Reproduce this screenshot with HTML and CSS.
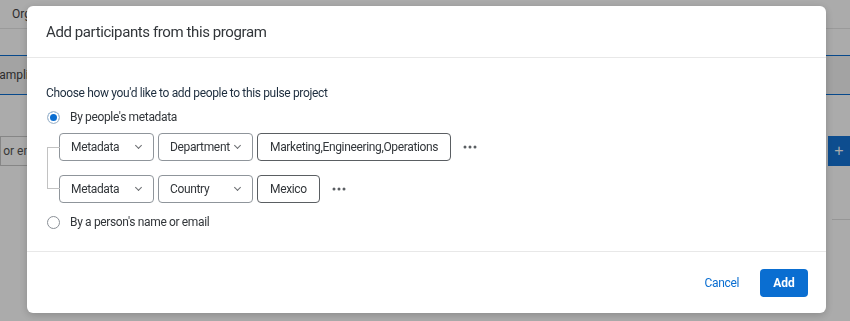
FILE: index.html
```html
<!DOCTYPE html>
<html lang="en">
<head>
  <meta charset="UTF-8" />
  <title>Add participants</title>
  <link rel="stylesheet" href="styles.css">
</head>
<body>
  <!-- page behind the modal -->
  <div class="page">
    <div class="topnav"><span class="nav-tab">Organization</span></div>
    <div class="subbar"></div>
    <div class="tabs"><span class="tab">Sampling</span></div>
    <div class="search-row">
      <div class="search-box">Search by name or email</div>
      <div class="search-spacer"></div>
      <button class="add-square">+</button>
    </div>
    <div class="table-head"></div>
  </div>

  <div class="backdrop"></div>

  <div class="modal">
    <div class="modal-header">
      <h2>Add participants from this program</h2>
    </div>

    <div class="modal-body">
      <p class="prompt">Choose how you'd like to add people to this pulse project</p>

      <label class="radio-row">
        <span class="radio checked"></span>
        <span>By people's metadata</span>
      </label>

      <div class="rules">
        <div class="rule">
          <div class="select"><span>Metadata</span><span class="chev"></span></div>
          <div class="select"><span>Department</span><span class="chev"></span></div>
          <div class="value">Marketing,Engineering,Operations</div>
          <svg class="more" width="14" height="4" viewBox="0 0 14 4"><circle cx="2" cy="2" r="1.5"/><circle cx="7" cy="2" r="1.5"/><circle cx="12" cy="2" r="1.5"/></svg>
        </div>
        <div class="rule">
          <div class="select"><span>Metadata</span><span class="chev"></span></div>
          <div class="select"><span>Country</span><span class="chev"></span></div>
          <div class="value">Mexico</div>
          <svg class="more" width="14" height="4" viewBox="0 0 14 4"><circle cx="2" cy="2" r="1.5"/><circle cx="7" cy="2" r="1.5"/><circle cx="12" cy="2" r="1.5"/></svg>
        </div>
      </div>

      <label class="radio-row">
        <span class="radio"></span>
        <span>By a person's name or email</span>
      </label>
    </div>

    <div class="modal-footer">
      <button class="btn-link">Cancel</button>
      <button class="btn-primary">Add</button>
    </div>
  </div>
</body>
</html>
```

FILE: styles.css
```css
* {
  box-sizing: border-box;
}

body {
  margin: 0;
  font-family: Roboto, "Liberation Sans", sans-serif;
  background: #ffffff;
  color: #32363a;
  overflow: hidden;
}

/* background page */
.page {
  width: 850px;
  height: 321px;
}

.topnav {
  height: 29px;
  border-bottom: 1px solid #e6e6e6;
  padding-left: 12px;
  display: flex;
  align-items: center;
  font-size: 12px;
  color: #444;
}

.subbar {
  height: 26px;
}

.tabs {
  height: 40px;
  border-top: 1px solid #0b6ed1;
  border-bottom: 1px solid #0b6ed1;
  background: #f3f3f3;
  display: flex;
  align-items: center;
  font-size: 12px;
  color: #444;
  text-indent: -8px;
}

.search-row {
  margin-top: 41px;
  display: flex;
  height: 30px;
}

.search-box {
  width: 300px;
  border: 1px solid #c8c8c8;
  display: flex;
  align-items: center;
  font-size: 12px;
  color: #555;
  text-indent: -86px;
}

.search-spacer {
  flex: 1;
}

.add-square {
  width: 22px;
  border: none;
  background: #1474d6;
  color: #fff;
  font-size: 16px;
  font-weight: 300;
  padding: 0;
}

.table-head {
  margin-top: 53px;
  margin-left: 832px;
  border-top: 1px solid #e0e0e0;
}

.backdrop {
  position: fixed;
  inset: 0;
  background: rgba(0, 0, 0, 0.33);
}

/* modal */
.modal {
  position: fixed;
  left: 27px;
  top: 6px;
  width: 799px;
  height: 307px;
  background: #fff;
  border-radius: 6px;
  box-shadow: 0 2px 8px rgba(0, 0, 0, 0.2);
  display: flex;
  flex-direction: column;
  letter-spacing: -0.35px;
}

.modal-header {
  height: 52px;
  border-bottom: 1px solid #e8e8e8;
  padding-left: 19px;
  display: flex;
  align-items: center;
}

.modal-header h2 {
  margin: 0;
  font-size: 15px;
  font-weight: 400;
  letter-spacing: -0.4px;
  color: #32363a;
}

.modal-body {
  height: 194px;
  border-bottom: 1px solid #e8e8e8;
  padding: 27px 19px 0 19px;
  font-size: 12px;
}

.prompt {
  margin: 0 0 8px 0;
  line-height: 16px;
  color: #1d2d3e;
}

.radio-row {
  display: flex;
  align-items: center;
  gap: 10px;
  height: 16px;
  color: #32363a;
}

.radio {
  width: 13px;
  height: 13px;
  margin-left: 1px;
  border: 1px solid #8a8f96;
  border-radius: 50%;
  background: #fff;
}

.radio.checked {
  border-color: #b9c3cc;
  background: #0b6ed1;
  box-shadow: inset 0 0 0 2px #fff;
}

.rules {
  position: relative;
  margin: 8px 0 11px 0;
  padding-left: 13px;
  display: flex;
  flex-direction: column;
  gap: 14px;
}

/* connector bracket between the rules */
.rules::before {
  content: "";
  position: absolute;
  left: 1px;
  top: 14px;
  bottom: 14px;
  width: 12px;
  border: 1px solid #c2c2c2;
  border-right: none;
}

.rule {
  display: flex;
  align-items: center;
  gap: 4px;
  height: 28px;
}

.select {
  width: 95px;
  height: 28px;
  border: 1px solid #8f959b;
  border-radius: 4px;
  padding: 0 12px 0 11px;
  display: flex;
  align-items: center;
  justify-content: space-between;
}

.chev {
  width: 5px;
  height: 5px;
  border-right: 1px solid #6a6d70;
  border-bottom: 1px solid #6a6d70;
  transform: rotate(45deg);
  margin-top: -3px;
}

.value {
  height: 28px;
  border: 1px solid #5a5e62;
  border-radius: 4px;
  padding: 0 12px;
  display: flex;
  align-items: center;
}

.more {
  margin-left: 8px;
  fill: #5a5e62;
}

.modal-footer {
  flex: 1;
  display: flex;
  align-items: center;
  justify-content: flex-end;
  gap: 19px;
  padding-right: 18px;
}

.btn-link {
  border: none;
  background: none;
  font-family: inherit;
  font-size: 12px;
  letter-spacing: inherit;
  color: #0a6ed1;
  padding: 0 2px;
}

.btn-primary {
  width: 48px;
  height: 28px;
  border: none;
  border-radius: 4px;
  background: #0a6ed1;
  color: #fff;
  font-family: inherit;
  font-size: 12px;
  font-weight: 700;
}
```
